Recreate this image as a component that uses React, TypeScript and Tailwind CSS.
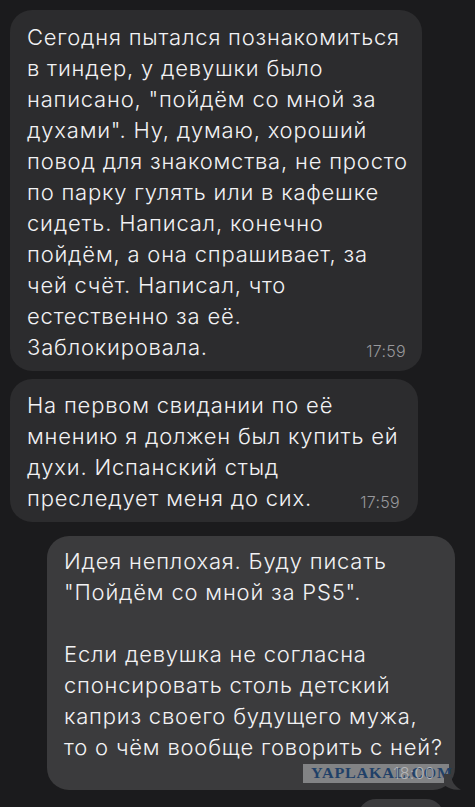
import React from "react";

const font = { fontFamily: "Inter, 'Noto Sans', sans-serif" };

function Lines({ lines }: { lines: string[] }) {
  return (
    <>
      {lines.map((l, i) => (
        <div key={i} className="whitespace-pre">
          {l === "" ? "\u00a0" : l}
        </div>
      ))}
    </>
  );
}

export default function App() {
  const b1 = [
    "Сегодня пытался познакомиться",
    "в тиндер, у девушки было",
    "написано, \"пойдём со мной за",
    "духами\". Ну, думаю, хороший",
    "повод для знакомства, не просто",
    "по парку гулять или в кафешке",
    "сидеть. Написал, конечно",
    "пойдём, а она спрашивает, за",
    "чей счёт. Написал, что",
    "естественно за её.",
  ];
  const b2 = [
    "На первом свидании по её",
    "мнению я должен был купить ей",
    "духи. Испанский стыд",
  ];
  const b3 = [
    "Идея неплохая. Буду писать",
    "\"Пойдём со мной за PS5\".",
    "",
    "Если девушка не согласна",
    "спонсировать столь детский",
    "каприз своего будущего мужа,",
    "то о чём вообще говорить с ней?",
  ];
  const bubbleText = "text-[22px] font-[350] leading-[31px] tracking-[0.8px]";
  return (
    <div
      className="h-[807px] w-[475px] overflow-hidden bg-[#1b1b1d] text-[#f2f2f4]"
      style={font}
    >
      <div className="flex flex-col pt-[10px]">
        {/* bubble 1 */}
        <div className={`ml-[10px] w-[412px] rounded-[22px] bg-[#2c2c2e] pl-[17px] pr-[16px] pt-[12px] pb-[8px] ${bubbleText}`}>
          <Lines lines={b1} />
          <div className="flex items-end justify-between">
            <span>Заблокировала.</span>
            <span className="mb-[2px] text-[16px] font-light tracking-[0.3px] leading-[20px] text-[#98989c]">17:59</span>
          </div>
        </div>
        {/* bubble 2 */}
        <div className={`ml-[10px] mt-[8px] w-[408px] rounded-[22px] bg-[#2c2c2e] pl-[17px] pr-[18px] pt-[11px] pb-[8px] ${bubbleText}`}>
          <Lines lines={b2} />
          <div className="flex items-end justify-between">
            <span>преследует меня до сих.</span>
            <span className="mb-[2px] text-[16px] font-light tracking-[0.3px] leading-[20px] text-[#98989c]">17:59</span>
          </div>
        </div>
        {/* bubble 3 */}
        <div className={`relative ml-[47px] mt-[14px] w-[408px] rounded-[22px] bg-[#3b3b3d] pl-[17px] pr-[16px] pt-[10px] pb-[6px] ${bubbleText}`}>
          <Lines lines={b3} />
          <div className="flex h-[21px] items-center justify-end">
            <div className="relative mr-[-10px] flex h-[19px] w-[146px] items-center justify-start bg-[#828385] pl-[8px]">
              <span
                className="inline-block origin-left scale-x-[1.15] whitespace-nowrap text-[14px] font-bold leading-none tracking-[0.7px] text-[#1f4068]"
                style={{ fontFamily: "'Liberation Serif', serif" }}
              >
                YAPLAKAL.COM
              </span>
              <span className="absolute right-[14px] top-[0px] text-[16px] font-light leading-[19px] tracking-[0.3px] text-[#c4c5c8]/75">
                18:00
              </span>
            </div>
          </div>
          <svg
            className="absolute bottom-0 right-[-7px]"
            width="18"
            height="16"
            viewBox="0 0 18 16"
          >
            <path d="M0 0 L7 0 C7 7 11 13 17 15.5 C11 16.5 5 15 0 11 Z" fill="#3b3b3d" />
          </svg>
        </div>
        {/* partial next bubble */}
        <div className="ml-[358px] mt-[9px] h-[30px] w-[86px] rounded-t-[18px] bg-[#3b3b3d]" />
      </div>
    </div>
  );
}
